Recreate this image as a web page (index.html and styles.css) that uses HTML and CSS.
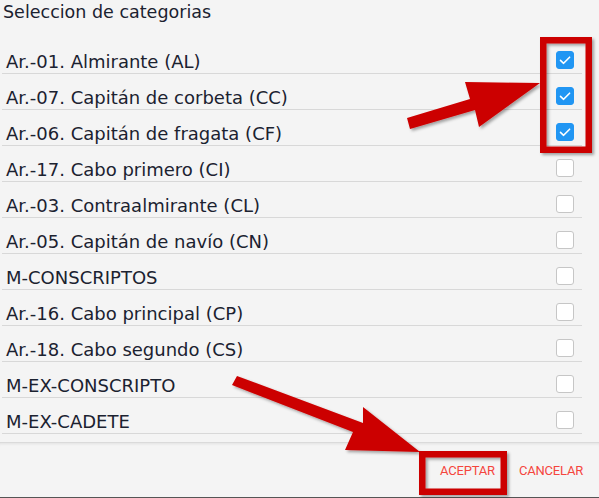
FILE: index.html
```html
<!DOCTYPE html>
<html lang="es">
<head>
<meta charset="utf-8">
<title>Seleccion de categorias</title>
<link rel="stylesheet" href="styles.css">
</head>
<body>
<div class="dialog">
  <h1 class="title">Seleccion de categorias</h1>
  <ul class="list">
    <li class="row"><span class="label">Ar.-01. Almirante (AL)</span><span class="check on"><svg viewBox="0 0 18 18" width="18" height="18"><path d="M4.5 9.4 L7.6 12.3 L13.6 6.2" fill="none" stroke="#fff" stroke-width="1.6" stroke-linecap="round" stroke-linejoin="round"/></svg></span></li>
    <li class="row"><span class="label">Ar.-07. Capitán de corbeta (CC)</span><span class="check on"><svg viewBox="0 0 18 18" width="18" height="18"><path d="M4.5 9.4 L7.6 12.3 L13.6 6.2" fill="none" stroke="#fff" stroke-width="1.6" stroke-linecap="round" stroke-linejoin="round"/></svg></span></li>
    <li class="row"><span class="label">Ar.-06. Capitán de fragata (CF)</span><span class="check on"><svg viewBox="0 0 18 18" width="18" height="18"><path d="M4.5 9.4 L7.6 12.3 L13.6 6.2" fill="none" stroke="#fff" stroke-width="1.6" stroke-linecap="round" stroke-linejoin="round"/></svg></span></li>
    <li class="row"><span class="label">Ar.-17. Cabo primero (CI)</span><span class="check"></span></li>
    <li class="row"><span class="label">Ar.-03. Contraalmirante (CL)</span><span class="check"></span></li>
    <li class="row"><span class="label">Ar.-05. Capitán de navío (CN)</span><span class="check"></span></li>
    <li class="row"><span class="label">M-CONSCRIPTOS</span><span class="check"></span></li>
    <li class="row"><span class="label">Ar.-16. Cabo principal (CP)</span><span class="check"></span></li>
    <li class="row"><span class="label">Ar.-18. Cabo segundo (CS)</span><span class="check"></span></li>
    <li class="row"><span class="label">M-EX-CONSCRIPTO</span><span class="check"></span></li>
    <li class="row"><span class="label">M-EX-CADETE</span><span class="check"></span></li>
  </ul>
  <div class="footer">
    <button class="btn">ACEPTAR</button>
    <button class="btn">CANCELAR</button>
  </div>
</div>
<svg class="annot" width="599" height="498" viewBox="0 0 599 498">
  <defs>
    <filter id="sh" x="-10%" y="-10%" width="130%" height="130%">
      <feDropShadow dx="2" dy="2" stdDeviation="1.5" flood-color="#000" flood-opacity="0.35"/>
    </filter>
  </defs>
  <g filter="url(#sh)" fill="#cc0000">
    <polygon points="407,118 470,99 465,82 540,83 479,127 475,110 410,129"/>
    <polygon points="237,376 363,423 363,407 420,452 345,450 353,432 232,385"/>
  </g>
  <g filter="url(#sh)" fill="none" stroke="#cc0000" stroke-width="6.5">
    <rect x="543.25" y="40.25" width="45.5" height="109.5"/>
    <rect x="422.25" y="454.25" width="81.5" height="37.5"/>
  </g>
</svg>
</body>
</html>
```
FILE: styles.css
```css
html, body {
  margin: 0;
  padding: 0;
  background: #f4f4f4;
}
body {
  width: 599px;
  height: 498px;
  overflow: hidden;
  position: relative;
  font-family: "DejaVu Sans", Verdana, sans-serif;
  color: #1b2230;
}
.dialog {
  display: flex;
  flex-direction: column;
  height: 498px;
  box-sizing: border-box;
  border-bottom: 1px solid #555;
}
.title {
  margin: 0;
  font-size: 17.5px;
  font-weight: normal;
  line-height: 20px;
  padding: 2px 0 16px 3px;
  height: 20px;
}
.list {
  list-style: none;
  margin: 0 17px 0 2px;
  padding: 0;
}
.row {
  display: flex;
  align-items: center;
  justify-content: space-between;
  height: 35px;
  border-bottom: 1px solid #d8d8d8;
  padding: 0 8px 0 4px;
  font-size: 18px;
}
.label {
  padding-top: 11px;
}
.check {
  width: 18px;
  height: 18px;
  box-sizing: border-box;
  border: 1px solid #c6c6c6;
  border-radius: 3px;
  background: #fff;
  margin-top: 8px;
  display: flex;
}
.check.on {
  background: #2196f3;
  border-color: #2196f3;
}
.check svg {
  margin: -1px;
}
.footer {
  margin-top: 8px;
  flex: 1;
  display: flex;
  justify-content: flex-end;
  align-items: center;
  gap: 24px;
  padding: 0 16px 0 0;
  border-top: 1px solid #dadada;
  box-shadow: inset 0 3px 3px -2px rgba(0,0,0,0.08);
}
.btn {
  background: none;
  border: none;
  padding: 0;
  margin: 0;
  font-family: Roboto, "Liberation Sans", sans-serif;
  font-size: 13px;
  color: #f4453d;
  letter-spacing: -0.2px;
}
.annot {
  position: absolute;
  left: 0;
  top: 0;
  pointer-events: none;
}
```
